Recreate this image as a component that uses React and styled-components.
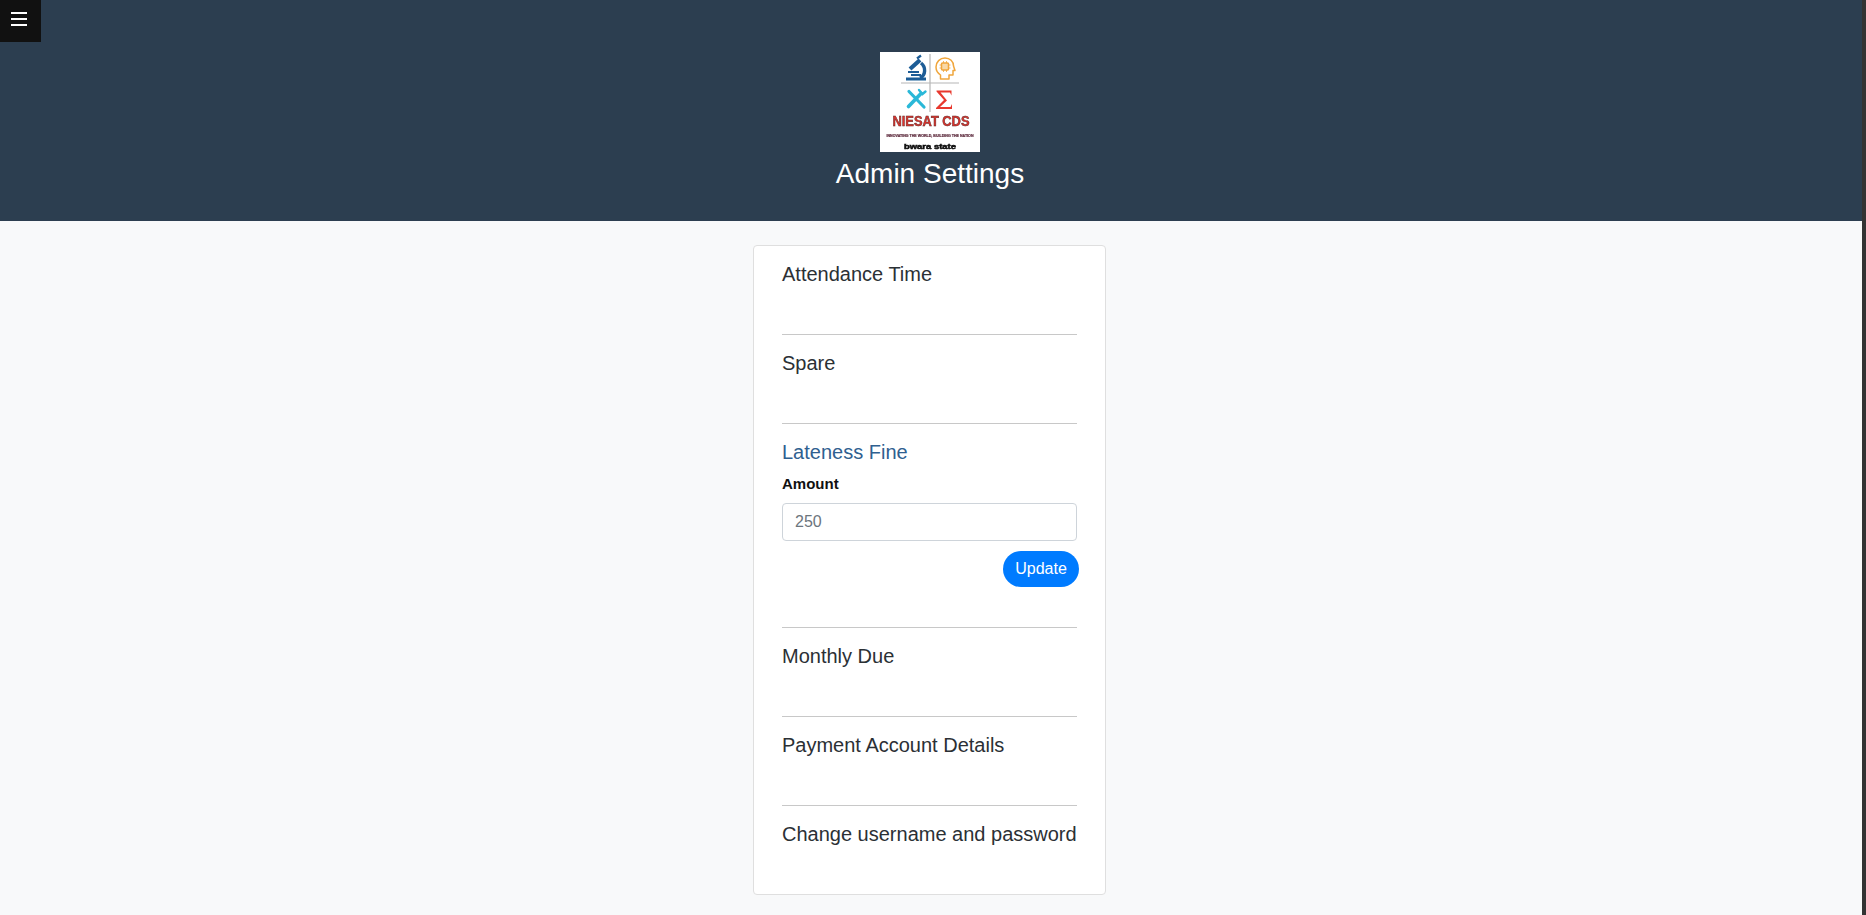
import React from 'react';
import styled, { createGlobalStyle } from 'styled-components';

const Global = createGlobalStyle`
html, body { margin: 0; padding: 0; }
body {
  font-family: "Liberation Sans", Arial, sans-serif;
  background: #f8f9fa;
  color: #212529;
}
* { box-sizing: border-box; }
`

const Page = styled.div`
min-height: 915px;
height: 915px;
overflow: hidden;
background: #f8f9fa;
border-right: 4px solid #333333;
`

const Header = styled.header`
position: relative;
height: 221px;
background: #2c3e50;
display: flex;
flex-direction: column;
align-items: center;
padding: 52px 2px 0 0;
`

const MenuButton = styled.button`
position: absolute;
top: 0;
left: 0;
width: 41px;
height: 42px;
padding: 12px 14px 0 11px;
background: #111111;
border: none;
display: flex;
flex-direction: column;
gap: 4px;
`

const MenuBar = styled.span`
display: block;
width: 16px;
height: 2px;
background: #ffffff;
`

const Logo = styled.svg`
display: block;
width: 100px;
height: 100px;
background: #ffffff;
`

const Title = styled.h1`
margin: 5px 0 0;
font-size: 28px;
font-weight: 400;
line-height: 34px;
color: #ffffff;
`

const Main = styled.main`
display: flex;
justify-content: center;
padding: 24px 3px 0 0;
`

const Card = styled.div`
width: 353px;
height: 650px;
padding: 16px 28px 0;
background: #ffffff;
border: 1px solid #dfdfdf;
border-radius: 4px;
`

const Section = styled.section`
height: ${p => p.$height}px;
border-bottom: ${p => (p.$last ? 'none' : '1px solid #c8c8c8')};
margin-bottom: 16px;
`

const SectionTitle = styled.h5`
margin: 0;
font-size: 20px;
font-weight: 400;
line-height: 24px;
white-space: nowrap;
color: ${p => (p.$active ? '#2f6090' : '#2b3035')};
`

const FieldLabel = styled.label`
display: block;
margin-top: 9px;
font-size: 15px;
font-weight: 700;
line-height: 21px;
color: #111111;
`

const AmountInput = styled.input`
display: block;
width: 100%;
height: 38px;
margin-top: 9px;
padding: 6px 12px;
font-family: inherit;
font-size: 16px;
color: #495057;
background: #ffffff;
border: 1px solid #ced4da;
border-radius: 4px;

&::placeholder { color: #6c757d; opacity: 1; }
`

const ButtonRow = styled.div`
display: flex;
justify-content: flex-end;
margin: 10px -2px 0 0;
`

const UpdateButton = styled.button`
width: 76px;
height: 36px;
padding: 0;
font-family: inherit;
font-size: 16px;
color: #ffffff;
background: #007bff;
border: none;
border-radius: 18px;
`

const NiesatLogo = () => (
  <Logo viewBox="0 0 100 100" role="img" aria-label="NIESAT CDS logo">
    <defs>
      <filter id="soft" x="-5%" y="-5%" width="110%" height="110%">
        <feGaussianBlur stdDeviation="0.35" />
      </filter>
    </defs>
    <g filter="url(#soft)">
      <path d="M50 2V60" stroke="#b5b5b5" strokeWidth="1.2" />
      <path d="M21 31H79" stroke="#b5b5b5" strokeWidth="1.2" />

      <g fill="none" stroke="#1c5c96" strokeLinecap="butt">
        <path d="M30 17 40 8" strokeWidth="4.200" />
        <path d="M37 6.500 41 3.500" strokeWidth="2.200" />
        <path d="M41 11c5 4 5 12-1 15" strokeWidth="3.400" />
        <path d="M28 20H39" strokeWidth="2" />
        <path d="M31 23H41" strokeWidth="2" />
        <path d="M26 27H46" strokeWidth="3" />
      </g>

      <g fill="none" stroke="#f0a63c" strokeWidth="1.500" strokeLinejoin="round">
        <path d="M60.500 27V23c-3-2-4.500-5-4.500-8 0-5 4-9 9-9s8.500 3.500 8.500 8l1.500 4.500h-2V23h-4v4z" />
        <rect x="61.500" y="11" width="7" height="7" rx="1" fill="#f8d9a8" />
        <path d="M63.500 9v2m3-2v2m-3 7v2m3-2v2M59.500 13h2m-2 3h2m7-3h2m-2 3h2" strokeWidth="0.800" />
      </g>

      <g fill="none" stroke="#2bb8d8" strokeLinecap="round">
        <path d="M28.500 54.500 41 41.500" strokeWidth="3.600" />
        <path d="M29 39.500 44 55" strokeWidth="3.200" />
        <path d="M39 38l3.500 4 3-2.500" strokeWidth="2.400" />
      </g>

      <path
        d="M56.500 38.500h15v5l-1.500-3H60.500l6.500 8-7 6.500h10.500l1.500-3v5H56v-1l8-8-7.500-8.500z"
        fill="#e8392f"
      />

      <text
        x="51"
        y="74"
        textAnchor="middle"
        fontFamily="'Liberation Sans', sans-serif"
        fontSize="14"
        fontWeight="700"
        fill="#e0332c"
        stroke="#5a2a2a"
        strokeWidth="0.500"
        textLength="77"
        lengthAdjust="spacingAndGlyphs"
      >
        NIESAT CDS
      </text>
      <text
        x="50"
        y="84.500"
        textAnchor="middle"
        fontFamily="'Liberation Sans', sans-serif"
        fontSize="3.600"
        fontWeight="700"
        fill="#5c2a3c"
        stroke="#5c2a3c"
        strokeWidth="0.200"
        textLength="87"
        lengthAdjust="spacingAndGlyphs"
      >
        INNOVATING THE WORLD, BUILDING THE NATION
      </text>
      <text
        x="50"
        y="96.500"
        textAnchor="middle"
        fontFamily="'Liberation Sans', sans-serif"
        fontSize="7"
        fontWeight="700"
        fill="#111111"
        stroke="#111111"
        strokeWidth="0.500"
        textLength="52"
        lengthAdjust="spacingAndGlyphs"
      >
        bwara state
      </text>
    </g>
  </Logo>
)

export default function App() {
  return (
    <>
      <Global />
      <Page>
        <Header>
          <MenuButton aria-label="Open menu">
            <MenuBar />
            <MenuBar />
            <MenuBar />
          </MenuButton>
          <NiesatLogo />
          <Title>Admin Settings</Title>
        </Header>
        <Main>
          <Card>
            <Section $height={73}>
              <SectionTitle>Attendance Time</SectionTitle>
            </Section>
            <Section $height={73}>
              <SectionTitle>Spare</SectionTitle>
            </Section>
            <Section $height={188}>
              <SectionTitle $active>Lateness Fine</SectionTitle>
              <FieldLabel htmlFor="amount">Amount</FieldLabel>
              <AmountInput id="amount" placeholder="250" />
              <ButtonRow>
                <UpdateButton>Update</UpdateButton>
              </ButtonRow>
            </Section>
            <Section $height={73}>
              <SectionTitle>Monthly Due</SectionTitle>
            </Section>
            <Section $height={73}>
              <SectionTitle>Payment Account Details</SectionTitle>
            </Section>
            <Section $last $height={60}>
              <SectionTitle>Change username and password</SectionTitle>
            </Section>
          </Card>
        </Main>
      </Page>
    </>
  );
}
